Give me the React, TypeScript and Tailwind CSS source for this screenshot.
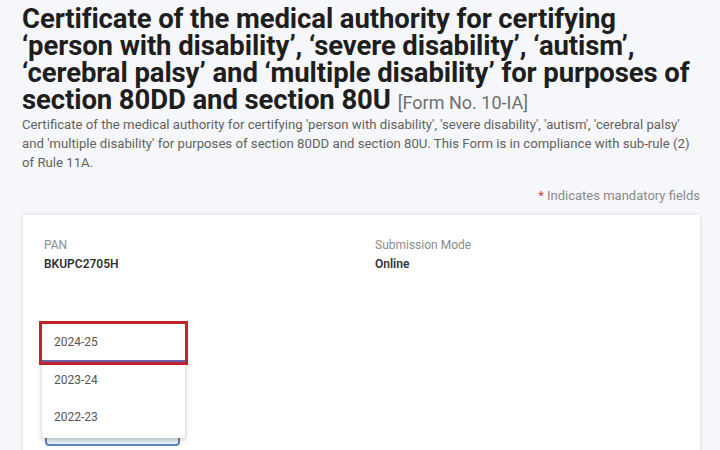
const years = ['2024-25', '2023-24', '2022-23'];

export default function App() {
  return (
    <div className="w-[720px] h-[450px] overflow-hidden bg-[#f6f7fa] font-['Roboto','Liberation_Sans',sans-serif]">
      <div className="pl-[22px] pr-[20px] pt-[5px]">
        <h1 className="text-[27.5px] leading-[27px] font-bold text-[#1e1e1e] tracking-[-0.1px] w-[690px]">
          Certificate of the medical authority for certifying ‘person with disability’, ‘severe disability’, ‘autism’, ‘cerebral palsy’ and ‘multiple disability’ for purposes of section 80DD and section 80U
          <span className="ml-[7px] text-[18px] font-normal text-[#6f6f6f] tracking-normal">[Form No. 10-IA]</span>
        </h1>
        <p className="mt-[0px] text-[13.2px] leading-[18.8px] text-[#626262] w-[676px]">
          Certificate of the medical authority for certifying 'person with disability', 'severe disability', 'autism', 'cerebral palsy' and 'multiple disability' for purposes of section 80DD and section 80U. This Form is in compliance with sub-rule (2) of Rule 11A.
        </p>
        <div className="mt-[14px] text-right text-[13px] text-[#8a8a8a]">
          <span className="text-[#d9374a]">*</span> Indicates mandatory fields
        </div>
      </div>

      <div className="ml-[23px] mr-[20px] mt-[9px] h-[260px] bg-white shadow-[0_0_4px_rgba(0,0,0,0.12)] px-[21px] pt-[21px]">
        <div className="grid grid-cols-[331px_1fr]">
          <div>
            <div className="text-[12px] text-[#8c8c8c]">PAN</div>
            <div className="mt-[1px] text-[12px] font-semibold text-[#333]">BKUPC2705H</div>
          </div>
          <div>
            <div className="text-[12px] text-[#8c8c8c]">Submission Mode</div>
            <div className="mt-[1px] text-[12px] font-semibold text-[#333]">Online</div>
          </div>
        </div>

        {/* assessment year select, menu open */}
        <div className="relative mt-[131px] ml-[1px] w-[135px] h-[42px] rounded-[4px] border-2 border-[#5e86b8] bg-[#eaf4fd]">
          <div className="absolute left-[-5px] top-[-82px] w-[143px] h-[114px] bg-white shadow-[0_2px_5px_rgba(0,0,0,0.25)] rounded-[2px] flex flex-col">
            {years.map((y, i) => (
              <div
                key={y}
                className={
                  i === 0
                    ? 'h-[38px] flex items-center pl-[12px] text-[12px] text-[#555] outline-[3px] outline-[#c0222e] border-b-2 border-[#6a62a8]'
                    : 'h-[37px] flex items-center pl-[12px] text-[12px] text-[#555]'
                }
              >
                {y}
              </div>
            ))}
          </div>
        </div>
      </div>
    </div>
  );
}
